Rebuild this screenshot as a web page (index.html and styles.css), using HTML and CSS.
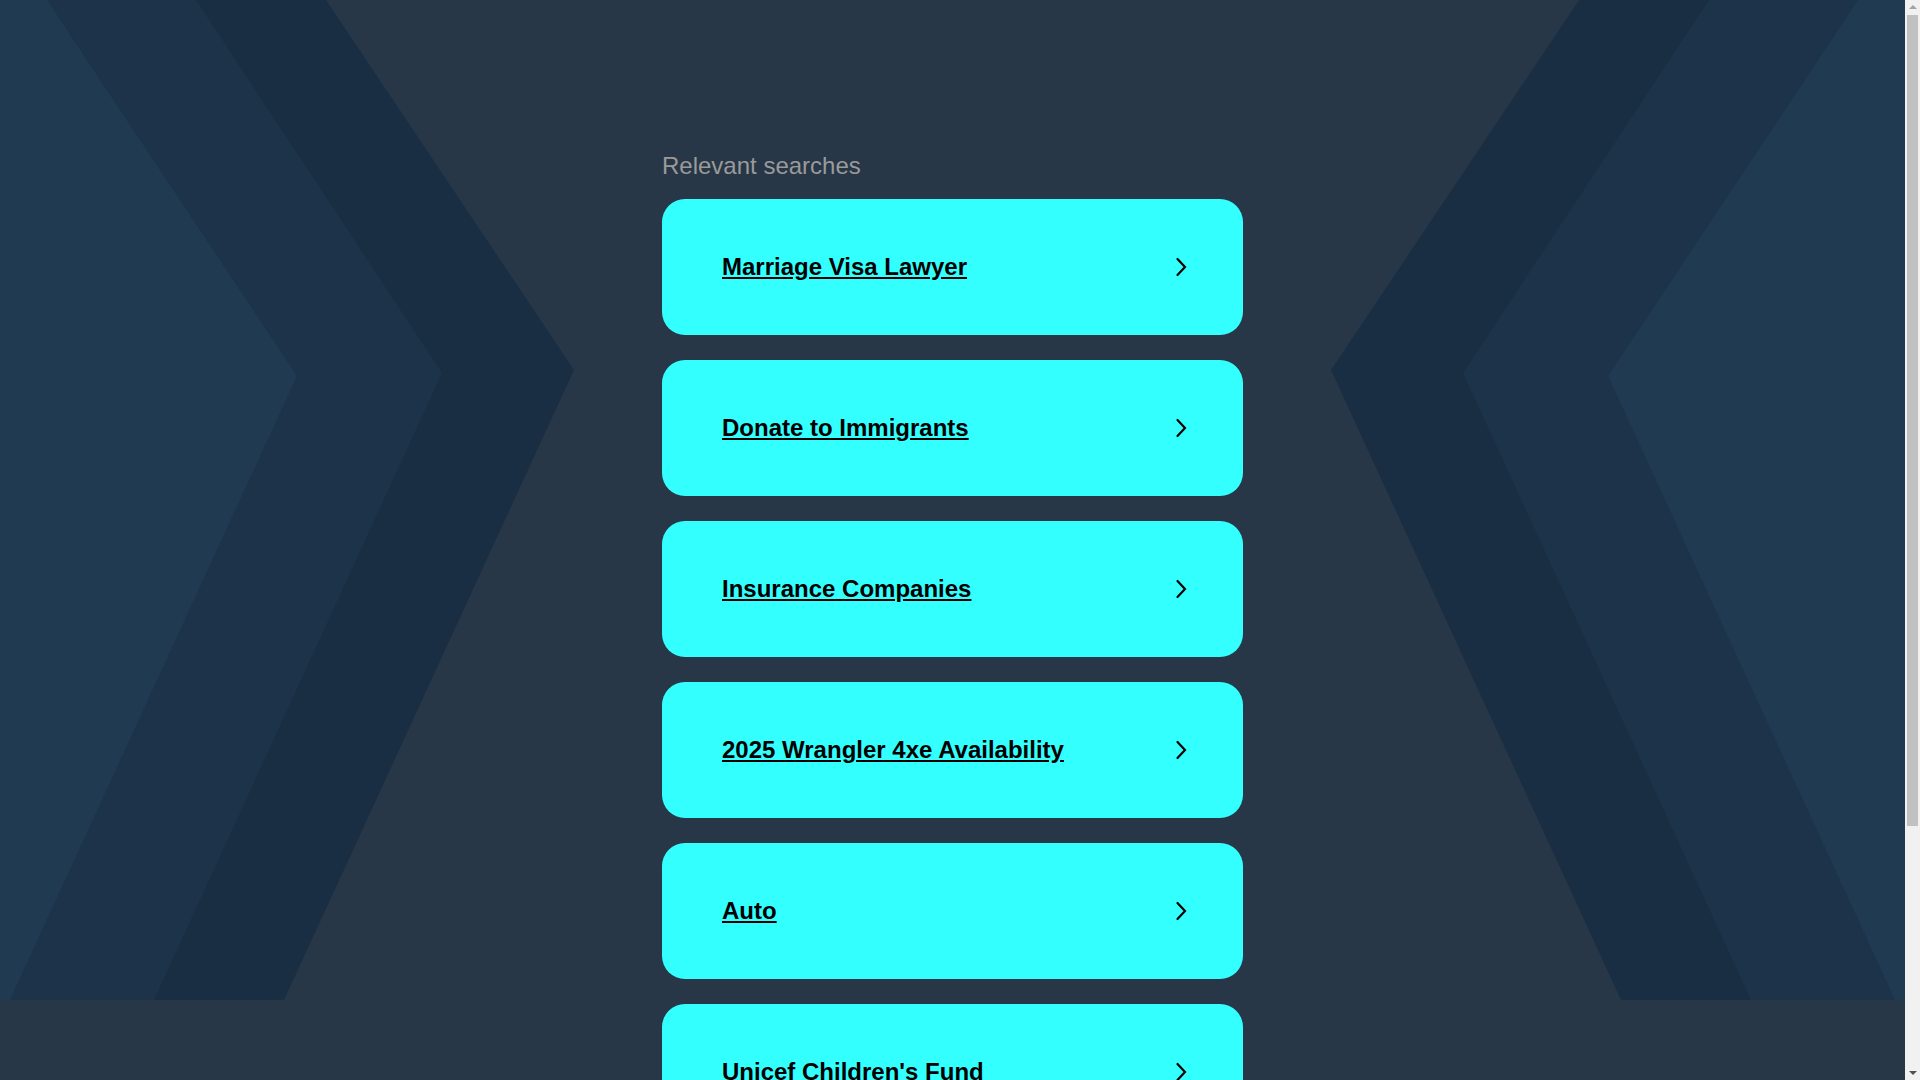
FILE: index.html
```html
<!DOCTYPE html>
<html lang="en">
<head>
<meta charset="utf-8">
<title>Relevant searches</title>
<link rel="stylesheet" href="styles.css">
</head>
<body>
<div class="page">
  <div class="bg" aria-hidden="true">
    <svg class="bg-svg" viewBox="0 0 1905 1000" preserveAspectRatio="none">
      <polygon class="band-outer" points="0,0 326,0 574,370 284,1000 0,1000"/>
      <polygon class="band-middle" points="0,0 196,0 442,373 154,1000 0,1000"/>
      <polygon class="band-inner" points="0,0 47,0 297,376 10,1000 0,1000"/>
      <polygon class="band-outer" points="1905,0 1579,0 1331,370 1621,1000 1905,1000"/>
      <polygon class="band-middle" points="1905,0 1709,0 1463,373 1751,1000 1905,1000"/>
      <polygon class="band-inner" points="1905,0 1858,0 1608,376 1895,1000 1905,1000"/>
    </svg>
  </div>
  <main class="content">
    <h2 class="heading">Relevant searches</h2>
    <ul class="list">
      <li class="card"><a class="link" href="#">Marriage Visa Lawyer</a><svg class="chev" viewBox="0 0 12 20"><path d="M2.5 2 L10 10 L2.5 18"/></svg></li>
      <li class="card"><a class="link" href="#">Donate to Immigrants</a><svg class="chev" viewBox="0 0 12 20"><path d="M2.5 2 L10 10 L2.5 18"/></svg></li>
      <li class="card"><a class="link" href="#">Insurance Companies</a><svg class="chev" viewBox="0 0 12 20"><path d="M2.5 2 L10 10 L2.5 18"/></svg></li>
      <li class="card"><a class="link" href="#">2025 Wrangler 4xe Availability</a><svg class="chev" viewBox="0 0 12 20"><path d="M2.5 2 L10 10 L2.5 18"/></svg></li>
      <li class="card"><a class="link" href="#">Auto</a><svg class="chev" viewBox="0 0 12 20"><path d="M2.5 2 L10 10 L2.5 18"/></svg></li>
      <li class="card"><a class="link" href="#">Unicef Children's Fund</a><svg class="chev" viewBox="0 0 12 20"><path d="M2.5 2 L10 10 L2.5 18"/></svg></li>
    </ul>
  </main>
</div>
<div class="scrollbar" aria-hidden="true">
  <span class="sb-up"></span>
  <span class="sb-thumb"></span>
  <span class="sb-down"></span>
</div>
</body>
</html>
```
FILE: styles.css
```css
html, body {
  margin: 0;
  padding: 0;
}
html {
  overflow: hidden;
}
body {
  background: #273747;
  font-family: "Liberation Sans", Arial, sans-serif;
}
.page {
  position: relative;
  width: calc(100% - 15px);
  min-height: 1397px;
}
.bg {
  position: absolute;
  top: 0;
  left: 0;
  right: 0;
  height: 1000px;
  z-index: 0;
}
.bg-svg {
  display: block;
  width: 100%;
  height: 100%;
}
.band-outer { fill: #1a2e43; }
.band-middle { fill: #1d334a; }
.band-inner { fill: #1f3a51; }
.content {
  position: relative;
  z-index: 1;
  width: 581px;
  margin: 0 auto;
  padding: 152px 0 232px;
}
.heading {
  margin: 0 0 19px;
  font-size: 24px;
  line-height: 28px;
  font-weight: normal;
  color: #9a9a9a;
}
.list {
  list-style: none;
  margin: 0;
  padding: 0;
}
.card {
  display: flex;
  align-items: center;
  justify-content: space-between;
  height: 136px;
  margin: 0 0 25px;
  padding: 0 56px 0 60px;
  box-sizing: border-box;
  background: #33ffff;
  border-radius: 23px;
}
.link {
  color: #000;
  font-size: 24px;
  font-weight: bold;
  text-decoration: underline;
}
.chev {
  width: 12px;
  height: 20px;
  flex: none;
}
.chev path {
  fill: none;
  stroke: #000;
  stroke-width: 2.2;
  stroke-linecap: round;
  stroke-linejoin: miter;
}
.scrollbar {
  position: fixed;
  top: 0;
  right: 0;
  width: 15px;
  height: 100vh;
  background: #f1f1f1;
  z-index: 10;
}
.sb-up, .sb-down {
  position: absolute;
  left: 4px;
  width: 0;
  height: 0;
  border-left: 4px solid transparent;
  border-right: 4px solid transparent;
}
.sb-up {
  top: 5px;
  border-bottom: 4px solid #a3a3a3;
}
.sb-down {
  bottom: 5px;
  border-top: 4px solid #505050;
}
.sb-thumb {
  position: absolute;
  top: 15px;
  left: 2px;
  width: 11px;
  height: 811px;
  background: #c1c1c1;
}
```
